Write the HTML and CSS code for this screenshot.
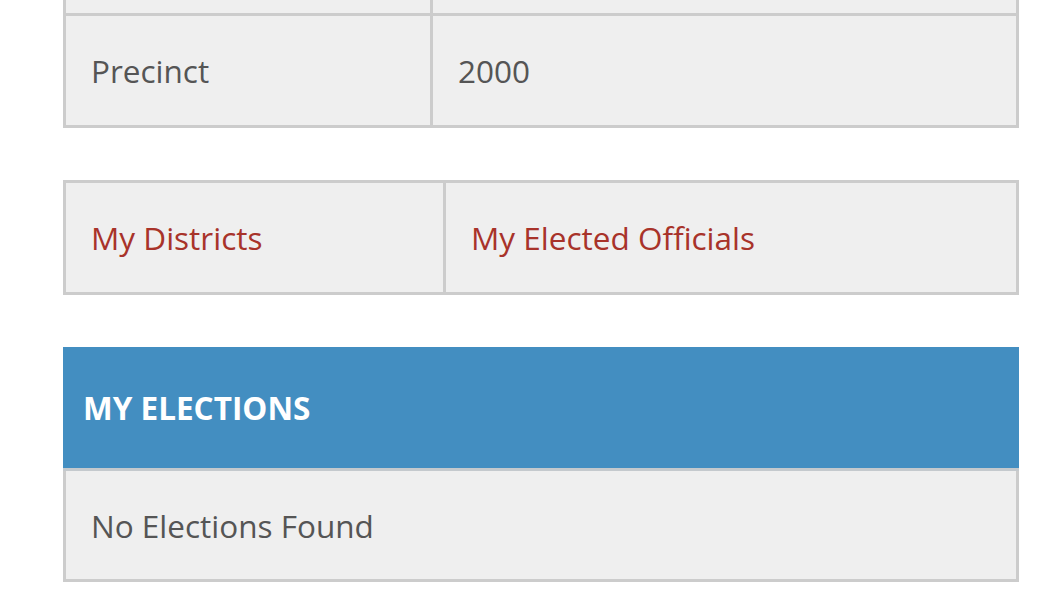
FILE: index.html
```html
<!DOCTYPE html>
<html>
<head>
<meta charset="utf-8">
<link rel="stylesheet" href="styles.css">
</head>
<body>
<div class="page">
  <table class="info">
    <tr><td class="c1">&nbsp;</td><td>&nbsp;</td></tr>
    <tr><td class="c1">Precinct</td><td>2000</td></tr>
  </table>
  <table class="links">
    <tr><td class="c1"><a href="#">My Districts</a></td><td><a href="#">My Elected Officials</a></td></tr>
  </table>
  <div class="panel">
    <div class="panel-head">MY ELECTIONS</div>
    <div class="panel-body">No Elections Found</div>
  </div>
</div>
</body>
</html>
```
FILE: styles.css
```css
html, body { margin: 0; padding: 0; background: #fff; }
body { font-family: "Open Sans", "Liberation Sans", sans-serif; color: #555; }
.page { margin: -99px 30px 0 63px; }
table { width: 100%; border-collapse: collapse; font-size: 31.5px; line-height: 45px; }
td { border: 3px solid #ccc; background: #efefef; padding: 32px 24px 32px 25px; }
.info .c1 { width: 315px; }
.links { margin-top: 52px; }
.links .c1 { width: 328px; }
a { color: #a8332a; text-decoration: none; }
.panel { margin-top: 52px; }
.panel-head { background: #438ec1; color: #fff; font-weight: 700; font-size: 31.5px; line-height: 45px; padding: 38px 20px; border-bottom: 3px solid #c4c9cd; }
.panel-body { background: #efefef; border: 3px solid #ccc; border-top: 0; font-size: 31.5px; line-height: 45px; padding: 32px 25px 31px; }
```
